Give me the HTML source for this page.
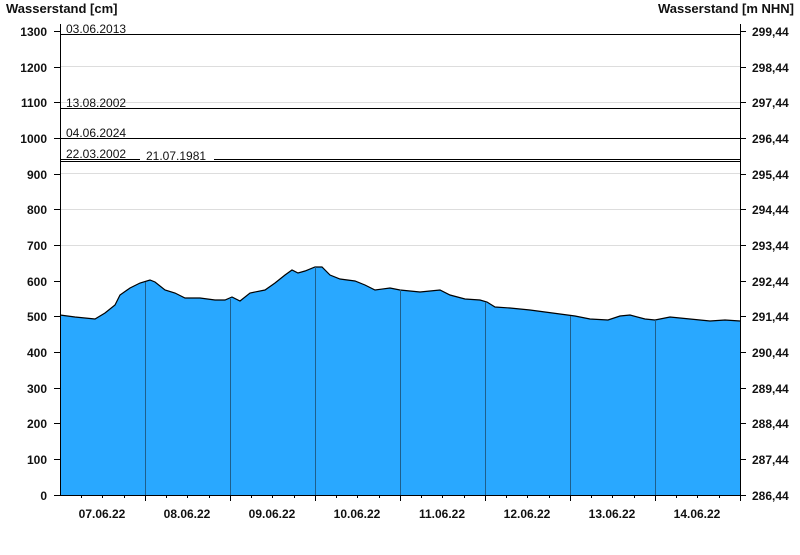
<!DOCTYPE html><html><head><style>body{margin:0;background:#fff}svg text{font-family:"Liberation Sans",Arial,sans-serif}</style></head><body>
<svg width="800" height="550" xmlns="http://www.w3.org/2000/svg">
<g font-weight="bold" font-size="13" fill="#111">
<text x="6" y="13">Wasserstand [cm]</text>
<text x="794" y="13" text-anchor="end">Wasserstand [m NHN]</text>
</g>
<g stroke="#ddd" stroke-width="1">
<line x1="60" x2="740" y1="66.5" y2="66.5"/><line x1="60" x2="740" y1="102.5" y2="102.5"/>
<line x1="60" x2="740" y1="173.5" y2="173.5"/><line x1="60" x2="740" y1="209.5" y2="209.5"/><line x1="60" x2="740" y1="245.5" y2="245.5"/>
</g>
<path d="M60,315 L75,317 L95,319 L105,313 L115,305 L120,295 L130,288 L140,283 L150,280 L155,282 L165,290 L175,293 L185,298 L200,298 L215,300 L225,300 L232,297 L240,301 L250,293 L265,290 L275,283 L285,275 L292,270 L298,273 L305,271 L315,267 L322,267 L330,275 L340,279 L355,281 L365,285 L375,290 L390,288 L400,290 L420,292 L440,290 L450,295 L465,299 L480,300 L487,302 L495,307 L510,308 L530,310 L545,312 L560,314 L575,316 L590,319 L608,320 L620,316 L630,315 L645,319 L655,320 L670,317 L690,319 L710,321 L725,320 L740,321 L740,495 L60,495 Z" fill="#29a8ff" stroke="none"/>
<path d="M60,315 L75,317 L95,319 L105,313 L115,305 L120,295 L130,288 L140,283 L150,280 L155,282 L165,290 L175,293 L185,298 L200,298 L215,300 L225,300 L232,297 L240,301 L250,293 L265,290 L275,283 L285,275 L292,270 L298,273 L305,271 L315,267 L322,267 L330,275 L340,279 L355,281 L365,285 L375,290 L390,288 L400,290 L420,292 L440,290 L450,295 L465,299 L480,300 L487,302 L495,307 L510,308 L530,310 L545,312 L560,314 L575,316 L590,319 L608,320 L620,316 L630,315 L645,319 L655,320 L670,317 L690,319 L710,321 L725,320 L740,321" fill="none" stroke="#000" stroke-width="1.2"/>
<g stroke="#1e5f8c" stroke-width="1">
<line x1="145.5" x2="145.5" y1="282" y2="495"/><line x1="230.5" x2="230.5" y1="299" y2="495"/><line x1="315.5" x2="315.5" y1="267" y2="495"/><line x1="400.5" x2="400.5" y1="290" y2="495"/><line x1="485.5" x2="485.5" y1="302" y2="495"/><line x1="570.5" x2="570.5" y1="316" y2="495"/><line x1="655.5" x2="655.5" y1="320" y2="495"/>
</g>
<g stroke="#000" stroke-width="1">
<line x1="60" x2="740" y1="34.5" y2="34.5"/><line x1="60" x2="740" y1="108.5" y2="108.5"/><line x1="60" x2="740" y1="138.5" y2="138.5"/>
<line x1="60" x2="740" y1="161.5" y2="161.5"/><line x1="60" x2="140" y1="159.5" y2="159.5"/><line x1="214" x2="740" y1="159.5" y2="159.5"/>
<line x1="60.5" x2="60.5" y1="24" y2="495"/><line x1="740.5" x2="740.5" y1="24" y2="495"/><line x1="54" x2="746" y1="495.5" y2="495.5"/>
</g>
<g font-size="12" fill="#111">
<text x="66" y="33">03.06.2013</text><text x="66" y="107">13.08.2002</text><text x="66" y="137">04.06.2024</text><text x="66" y="158">22.03.2002</text><text x="146" y="160">21.07.1981</text>
</g>
<g stroke="#000"><path d="M54,31.5h6M54,67.5h6M54,102.5h6M54,138.5h6M54,174.5h6M54,209.5h6M54,245.5h6M54,281.5h6M54,316.5h6M54,352.5h6M54,388.5h6M54,423.5h6M54,459.5h6M740,31.5h6M740,67.5h6M740,102.5h6M740,138.5h6M740,174.5h6M740,209.5h6M740,245.5h6M740,281.5h6M740,316.5h6M740,352.5h6M740,388.5h6M740,423.5h6M740,459.5h6"/>
<path d="M145.5,495v6M230.5,495v6M315.5,495v6M400.5,495v6M485.5,495v6M570.5,495v6M655.5,495v6M740.5,495v6"/>
<path d="M81.5,495v3M102.5,495v3M124.5,495v3M166.5,495v3M187.5,495v3M209.5,495v3M251.5,495v3M272.5,495v3M294.5,495v3M336.5,495v3M357.5,495v3M379.5,495v3M421.5,495v3M442.5,495v3M464.5,495v3M506.5,495v3M527.5,495v3M549.5,495v3M591.5,495v3M612.5,495v3M634.5,495v3M676.5,495v3M697.5,495v3M719.5,495v3"/></g>
<g font-weight="bold" font-size="12" fill="#111" text-anchor="end">
<text x="47" y="36">1300</text><text x="47" y="72">1200</text><text x="47" y="107">1100</text><text x="47" y="143">1000</text><text x="47" y="179">900</text><text x="47" y="214">800</text><text x="47" y="250">700</text><text x="47" y="286">600</text><text x="47" y="321">500</text><text x="47" y="357">400</text><text x="47" y="393">300</text><text x="47" y="428">200</text><text x="47" y="464">100</text><text x="47" y="500">0</text>
</g>
<g font-weight="bold" font-size="12" fill="#111">
<text x="752" y="36">299,44</text><text x="752" y="72">298,44</text><text x="752" y="107">297,44</text><text x="752" y="143">296,44</text><text x="752" y="179">295,44</text><text x="752" y="214">294,44</text><text x="752" y="250">293,44</text><text x="752" y="286">292,44</text><text x="752" y="321">291,44</text><text x="752" y="357">290,44</text><text x="752" y="393">289,44</text><text x="752" y="428">288,44</text><text x="752" y="464">287,44</text><text x="752" y="500">286,44</text>
</g>
<g font-weight="bold" font-size="12" fill="#111" text-anchor="middle">
<text x="102" y="518">07.06.22</text><text x="187" y="518">08.06.22</text><text x="272" y="518">09.06.22</text><text x="357" y="518">10.06.22</text><text x="442" y="518">11.06.22</text><text x="527" y="518">12.06.22</text><text x="612" y="518">13.06.22</text><text x="697" y="518">14.06.22</text>
</g>
</svg></body></html>
